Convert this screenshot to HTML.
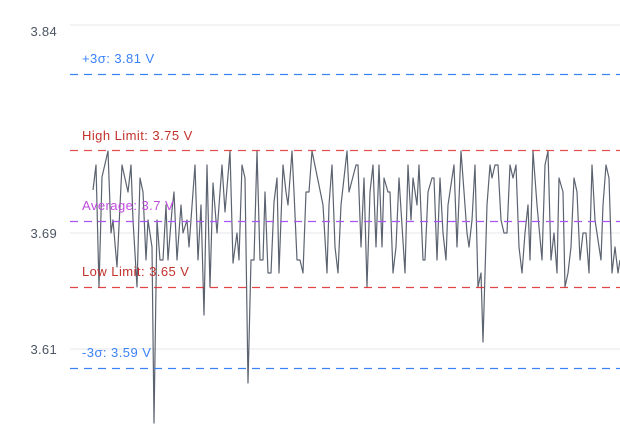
<!DOCTYPE html><html><head><style>html,body{margin:0;padding:0;background:#fff;width:620px;height:424px;overflow:hidden}</style></head><body>
<svg width="620" height="424" xmlns="http://www.w3.org/2000/svg" style="font-family:'Liberation Sans',sans-serif">
<g stroke="#e5e7eb" stroke-width="1"><line x1="70" y1="25" x2="620" y2="25"/><line x1="70" y1="233" x2="620" y2="233"/><line x1="70" y1="349" x2="620" y2="349"/></g>
<g font-size="13" fill="#4b5563" text-anchor="end" letter-spacing="0.3"><text x="57" y="36">3.84</text><text x="57" y="238">3.69</text><text x="57" y="354">3.61</text></g>
<polyline fill="none" stroke="#5c6370" stroke-width="1.2" stroke-linejoin="round" points="93,190 96,165 99,287 102,177 108,151 111,233 113,220 117,267 122,165 128,192 131,165 133,220 137,287 140,178 143,192 146,260 148,220 152,247 154,423 157,220 160,260 163,260 166,205 168,260 172,210 174,192 177,260 181,205 183,233 187,220 189,247 195,165 198,260 201,205 204,315 207,165 210,287 213,183 217,233 222,165 225,212 230,151 233,263 237,233 239,260 242,165 245,178 248,383 251,260 254,260 257,151 260,260 263,260 265,192 268,273 271,273 274,202 277,178 279,273 283,165 286,192 288,205 292,151 294,192 297,260 300,260 303,273 306,192 309,192 312,151 323,205 327,273 329,205 332,165 335,247 338,273 341,205 347,151 349,192 356,165 358,165 361,247 364,178 367,287 370,192 373,165 376,247 379,165 382,247 384,178 388,192 390,192 393,273 396,247 399,178 405,273 408,165 411,220 413,178 417,205 419,165 423,260 425,260 428,192 432,178 434,178 437,260 440,178 443,233 446,260 448,205 452,178 454,165 457,247 461,151 463,178 467,233 469,247 472,220 475,165 478,287 481,273 483,342 487,205 490,165 492,178 495,165 498,165 501,220 504,233 507,233 510,165 513,178 516,165 519,247 522,273 525,233 528,205 530,260 533,151 537,205 542,260 545,165 548,151 551,260 554,233 557,273 559,178 563,192 565,287 568,273 571,247 574,178 577,192 580,260 583,233 586,233 589,273 592,165 595,220 601,260 603,205 606,165 609,178 612,273 615,247 618,273 620,260"/>
<g stroke-width="1.2" stroke-dasharray="8,6" fill="none">
<line x1="70" y1="74.5" x2="620" y2="74.5" stroke="#3b82f6"/>
<line x1="70" y1="150.5" x2="620" y2="150.5" stroke="#dc2626" stroke-opacity="0.8"/>
<line x1="70" y1="221.5" x2="620" y2="221.5" stroke="#a855f7"/>
<line x1="70" y1="287.5" x2="620" y2="287.5" stroke="#dc2626" stroke-opacity="0.85"/>
<line x1="70" y1="368.5" x2="620" y2="368.5" stroke="#3b82f6"/>
</g>
<g font-size="13" letter-spacing="0.45">
<text x="82" y="63" fill="#3b82f6">+3σ: 3.81 V</text>
<text x="82" y="140" fill="#c2322d">High Limit: 3.75 V</text>
<text x="82" y="210" fill="#c04be0">Average: 3.7 V</text>
<text x="82" y="276" fill="#c2322d">Low Limit: 3.65 V</text>
<text x="82" y="357" fill="#3b82f6">-3σ: 3.59 V</text>
</g>
</svg>
</body></html>
